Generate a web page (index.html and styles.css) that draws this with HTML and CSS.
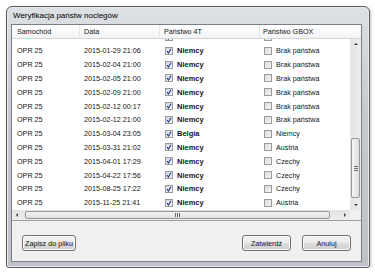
FILE: index.html
```html
<!DOCTYPE html>
<html lang="pl">
<head>
	<meta charset="UTF-8">
	<meta name="viewport" content="width=device-width, initial-scale=1.0">
	<title>Weryfikacja państw noclegów</title>
	<link rel="stylesheet" href="styles.css">
</head>
<body>
	<div class="window">
		<div class="titlebar">Weryfikacja państw noclegów</div>

		<div class="client">
			<div class="grid">
				<div class="grid-header">
					<span class="hcell">Samochód</span>
					<span class="hcell">Data</span>
					<span class="hcell">Państwo 4T</span>
					<span class="hcell">Państwo GBOX</span>
				</div>

				<div class="grid-body"> <!-- lista przewinięta, z pierwszego wiersza widać tylko dół pól wyboru -->
					<div class="rows">
						<div class="row"><span class="c1"></span><span class="c2"></span><span class="c3"><i class="cb on"></i></span><span class="c4"><i class="cb"></i></span></div>
						<div class="row"><span class="c1">OPR 25</span><span class="c2">2015-01-29 21:06</span><span class="c3"><i class="cb on"></i><b>Niemcy</b></span><span class="c4"><i class="cb"></i>Brak państwa</span></div>
						<div class="row"><span class="c1">OPR 25</span><span class="c2">2015-02-04 21:00</span><span class="c3"><i class="cb on"></i><b>Niemcy</b></span><span class="c4"><i class="cb"></i>Brak państwa</span></div>
						<div class="row"><span class="c1">OPR 25</span><span class="c2">2015-02-05 21:00</span><span class="c3"><i class="cb on"></i><b>Niemcy</b></span><span class="c4"><i class="cb"></i>Brak państwa</span></div>
						<div class="row"><span class="c1">OPR 25</span><span class="c2">2015-02-09 21:00</span><span class="c3"><i class="cb on"></i><b>Niemcy</b></span><span class="c4"><i class="cb"></i>Brak państwa</span></div>
						<div class="row"><span class="c1">OPR 25</span><span class="c2">2015-02-12 00:17</span><span class="c3"><i class="cb on"></i><b>Niemcy</b></span><span class="c4"><i class="cb"></i>Brak państwa</span></div>
						<div class="row"><span class="c1">OPR 25</span><span class="c2">2015-02-12 21:00</span><span class="c3"><i class="cb on"></i><b>Niemcy</b></span><span class="c4"><i class="cb"></i>Brak państwa</span></div>
						<div class="row"><span class="c1">OPR 25</span><span class="c2">2015-03-04 23:05</span><span class="c3"><i class="cb on"></i><b>Belgia</b></span><span class="c4"><i class="cb"></i>Niemcy</span></div>
						<div class="row"><span class="c1">OPR 25</span><span class="c2">2015-03-31 21:02</span><span class="c3"><i class="cb on"></i><b>Niemcy</b></span><span class="c4"><i class="cb"></i>Austria</span></div>
						<div class="row"><span class="c1">OPR 25</span><span class="c2">2015-04-01 17:29</span><span class="c3"><i class="cb on"></i><b>Niemcy</b></span><span class="c4"><i class="cb"></i>Czechy</span></div>
						<div class="row"><span class="c1">OPR 25</span><span class="c2">2015-04-22 17:56</span><span class="c3"><i class="cb on"></i><b>Niemcy</b></span><span class="c4"><i class="cb"></i>Czechy</span></div>
						<div class="row"><span class="c1">OPR 25</span><span class="c2">2015-08-25 17:22</span><span class="c3"><i class="cb on"></i><b>Niemcy</b></span><span class="c4"><i class="cb"></i>Czechy</span></div>
						<div class="row"><span class="c1">OPR 25</span><span class="c2">2015-11-25 21:41</span><span class="c3"><i class="cb on"></i><b>Niemcy</b></span><span class="c4"><i class="cb"></i>Austria</span></div>
					</div>
				</div>

				<div class="vscroll">
					<span class="sbtn"><i class="arr up"></i></span>
					<span class="vtrack"><span class="vthumb"><i class="grip-h"></i></span></span>
					<span class="sbtn"><i class="arr down"></i></span>
				</div>

				<div class="hscroll">
					<span class="sbtn"><i class="arr left"></i></span>
					<span class="htrack"><span class="hthumb"><i class="grip-v"></i></span></span>
					<span class="sbtn"><i class="arr right"></i></span>
				</div>

				<div class="corner"></div>
			</div>

			<div class="buttons">
				<button class="btn save">Zapisz do pliku</button>
				<span class="spacer"></span>
				<button class="btn">Zatwierdź</button>
				<button class="btn">Anuluj</button>
			</div>
		</div>
	</div>
</body>
</html>
```

FILE: styles.css
```css
body {
    margin: 0;
    padding: 0;
    background-color: #fff;
    font-family: "Liberation Sans", Arial, sans-serif;
    color: #151515;
}

/* ramka okna */
.window {
    box-sizing: border-box;
    width: 364px;
    height: 262px;
    margin: 6px 0 0 6px;
    padding: 0 7px 5px 4px;
    border: 1px solid #585b60;
    border-radius: 6px 6px 3px 3px;
    background: linear-gradient(#dde0e4, #c6cacf 40%, #bfc3c8);
    box-shadow: inset 0 0 0 1px #e9ebee, 1px 1px 3px rgba(0, 0, 0, 0.25);
    display: flex;
    flex-direction: column;
}
.titlebar {
    height: 17px;
    line-height: 17px;
    padding-left: 2px;
    font-size: 8px;
    color: #000;
}
.client {
    flex: 1;
    border: 1px solid #7b7e83;
    background-color: #f0f0f0;
    display: flex;
    flex-direction: column;
}

/* tabela */
.grid {
    display: grid;
    grid-template-columns: 1fr 11px;
    grid-template-rows: 14px 171px 10px;
    border-bottom: 1px solid #a0a0a0;
    background-color: #fff;
}
.grid-header {
    grid-column: 1 / 3;
    display: grid;
    grid-template-columns: 68px 80px 100px 1fr;
    background: linear-gradient(#ffffff, #f2f3f5);
    border-bottom: 1px solid #d5d5d5;
    font-size: 7.2px;
}
.hcell {
    box-sizing: border-box;
    line-height: 13px;
    padding-left: 4px;
    border-right: 1px solid #e6e6e6;
}
.hcell:first-child {
    padding-left: 5px;
}
.hcell:last-child {
    padding-left: 3px;
    border-right: none;
}
.grid-body {
    overflow: hidden;
}
.rows {
    margin-top: -8.8px;
}
.row {
    display: grid;
    grid-template-columns: 68px 80px 100px 1fr;
    height: 13.8px;
    align-items: center;
    font-size: 7.2px;
    white-space: nowrap;
}
.c1 { padding-left: 5px; }
.c2 { padding-left: 4px; }
.c3, .c4 {
    display: flex;
    align-items: center;
    gap: 4px;
}
.c3 { padding-left: 5px; }
.c4 { padding-left: 4px; }
.c3 b {
    font-size: 7.5px;
}

/* checkbox */
.cb {
    box-sizing: border-box;
    width: 8px;
    height: 8px;
    border: 1px solid #9a9b9d;
    background: linear-gradient(135deg, #d9dadc, #f7f7f7);
}
.cb.on {
    background:
        url("data:image/svg+xml,%3Csvg xmlns='http://www.w3.org/2000/svg' width='6' height='6'%3E%3Cpath d='M1 3.2L2.5 5L5 0.8' fill='none' stroke='%23213a8f' stroke-width='1.1'/%3E%3C/svg%3E") center / 6px 6px no-repeat,
        linear-gradient(135deg, #d3d8e0, #f4f6f9);
}

/* paski przewijania */
.vscroll {
    grid-column: 2;
    grid-row: 2;
    display: flex;
    flex-direction: column;
    background: linear-gradient(to right, #e3e3e3, #eeeeee);
}
.hscroll {
    grid-column: 1;
    grid-row: 3;
    display: flex;
    background: linear-gradient(#e3e3e3, #eeeeee);
}
.corner {
    grid-column: 2;
    grid-row: 3;
    background-color: #f0f0f0;
}
.sbtn {
    flex: 0 0 10px;
    display: flex;
    align-items: center;
    justify-content: center;
}
.arr {
    width: 0;
    height: 0;
}
.arr.up {
    border-left: 2px solid transparent;
    border-right: 2px solid transparent;
    border-bottom: 2px solid #3c3c3c;
}
.arr.down {
    border-left: 2px solid transparent;
    border-right: 2px solid transparent;
    border-top: 2px solid #3c3c3c;
}
.arr.left {
    border-top: 2px solid transparent;
    border-bottom: 2px solid transparent;
    border-right: 2px solid #3c3c3c;
}
.arr.right {
    border-top: 2px solid transparent;
    border-bottom: 2px solid transparent;
    border-left: 2px solid #3c3c3c;
}
.vtrack {
    flex: 1;
    display: flex;
    flex-direction: column;
    justify-content: flex-end;
    padding: 0 1px 2px 1px;
}
.vthumb {
    box-sizing: border-box;
    height: 60px;
    border: 1px solid #979797;
    border-radius: 2px;
    background: linear-gradient(to right, #f4f4f4, #e0e0e0);
    display: flex;
    align-items: center;
    justify-content: center;
}
.htrack {
    flex: 1;
    display: flex;
    align-items: center;
    padding: 0 10px 0 3px;
}
.hthumb {
    box-sizing: border-box;
    flex: 1;
    height: 8px;
    border: 1px solid #979797;
    border-radius: 2px;
    background: linear-gradient(#f4f4f4, #e0e0e0);
    display: flex;
    align-items: center;
    justify-content: center;
}
.grip-h {
    width: 4px;
    height: 5px;
    background: repeating-linear-gradient(#6a6a6a 0 1px, transparent 1px 2px);
}
.grip-v {
    width: 5px;
    height: 4px;
    background: repeating-linear-gradient(to right, #6a6a6a 0 1px, transparent 1px 2px);
}

/* przyciski */
.buttons {
    display: flex;
    gap: 11px;
    padding: 14px 10px 0 10px;
}
.spacer {
    flex: 1;
}
.btn {
    box-sizing: border-box;
    width: 49px;
    height: 16px;
    padding: 0;
    font-family: "Liberation Sans", Arial, sans-serif;
    font-size: 7.2px;
    color: #151515;
    border: 1px solid #707070;
    border-radius: 3px;
    background: linear-gradient(#f2f2f2 0, #ebebeb 50%, #dddddd 50%, #cfcfcf 100%);
    box-shadow: inset 0 0 0 1px #fbfbfb;
}
.btn.save {
    width: 54px;
}
```
